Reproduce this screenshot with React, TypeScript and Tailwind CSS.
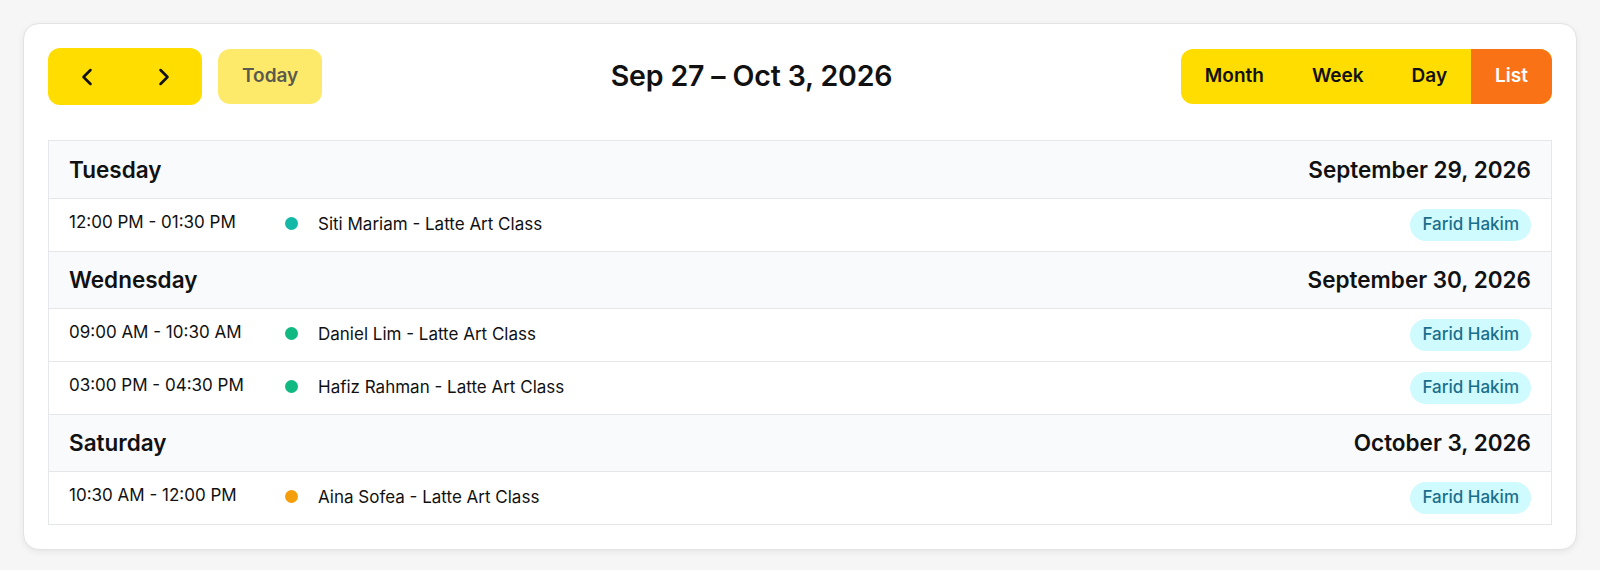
import { ChevronLeft, ChevronRight } from "lucide-react";

type Item = { time: string; title: string; dot: string; staff: string };
type Day = { name: string; date: string; items: Item[] };

const days: Day[] = [
  {
    name: "Tuesday",
    date: "September 29, 2026",
    items: [
      { time: "12:00 PM - 01:30 PM", title: "Siti Mariam - Latte Art Class", dot: "bg-[#14b8a6]", staff: "Farid Hakim" },
    ],
  },
  {
    name: "Wednesday",
    date: "September 30, 2026",
    items: [
      { time: "09:00 AM - 10:30 AM", title: "Daniel Lim - Latte Art Class", dot: "bg-[#10b981]", staff: "Farid Hakim" },
      { time: "03:00 PM - 04:30 PM", title: "Hafiz Rahman - Latte Art Class", dot: "bg-[#10b981]", staff: "Farid Hakim" },
    ],
  },
  {
    name: "Saturday",
    date: "October 3, 2026",
    items: [
      { time: "10:30 AM - 12:00 PM", title: "Aina Sofea - Latte Art Class", dot: "bg-[#f59e0b]", staff: "Farid Hakim" },
    ],
  },
];

const views = ["Month", "Week", "Day", "List"];

const App = () => {
  return (
    <div
      className="min-h-[570px] bg-[#f6f6f6] px-[23px] pt-[23px] pb-[23px] text-[#111111]"
      style={{ fontFamily: "Inter, 'Noto Sans', sans-serif" }}
    >
      <div className="rounded-2xl border border-[#e3e3e3] bg-white p-6 shadow-[0_2px_6px_rgba(0,0,0,0.07)]">
        {/* Toolbar */}
        <div className="mb-[35px] flex items-center justify-between">
          <div className="flex items-center gap-4">
            <div className="flex h-[57px] overflow-hidden rounded-xl bg-[#ffdd00]">
              <button className="flex w-[77px] items-center justify-center text-[#111]">
                <ChevronLeft size={28} strokeWidth={2.2} />
              </button>
              <button className="flex w-[77px] items-center justify-center text-[#111]">
                <ChevronRight size={28} strokeWidth={2.2} />
              </button>
            </div>
            <button className="h-[55px] rounded-xl bg-[#feea6a] px-6 text-[19px] font-semibold text-[#5b5a4e]">
              Today
            </button>
          </div>

          <h2 className="text-[28.5px] font-semibold tracking-[-0.005em]">Sep 27 – Oct 3, 2026</h2>

          <div className="flex h-[55px] overflow-hidden rounded-xl bg-[#ffdd00]">
            {views.map((v) => (
              <button
                key={v}
                className={
                  v === "List"
                    ? "bg-[#f97316] px-6 text-[19px] font-semibold text-white"
                    : "px-6 text-[19px] font-semibold text-[#111]"
                }
              >
                {v}
              </button>
            ))}
          </div>
        </div>

        {/* List */}
        <div className="border border-[#e5e7eb]">
          {days.map((day, di) => (
            <div key={day.name}>
              <div
                className={`flex h-[57px] items-center justify-between bg-[#f8fafc] px-5 ${
                  di > 0 ? "border-t border-[#e5e7eb]" : ""
                }`}
              >
                <span className="text-[22.5px] font-semibold">{day.name}</span>
                <span className="text-[22.5px] font-semibold">{day.date}</span>
              </div>
              {day.items.map((item) => (
                <div
                  key={item.title}
                  className="flex h-[53px] items-center border-t border-[#e5e7eb] px-5"
                >
                  <span className="w-[216px] pb-[4px] text-[17px]">{item.time}</span>
                  <span className={`mb-[4px] h-[13px] w-[13px] rounded-full ${item.dot}`} />
                  <span className="ml-5 flex-1 text-[17px]">{item.title}</span>
                  <span className="rounded-full bg-[#cffafe] px-3 py-[3px] text-[17px] font-medium text-[#1a6f8c]">
                    {item.staff}
                  </span>
                </div>
              ))}
            </div>
          ))}
        </div>
      </div>
    </div>
  );
};

export default App;
